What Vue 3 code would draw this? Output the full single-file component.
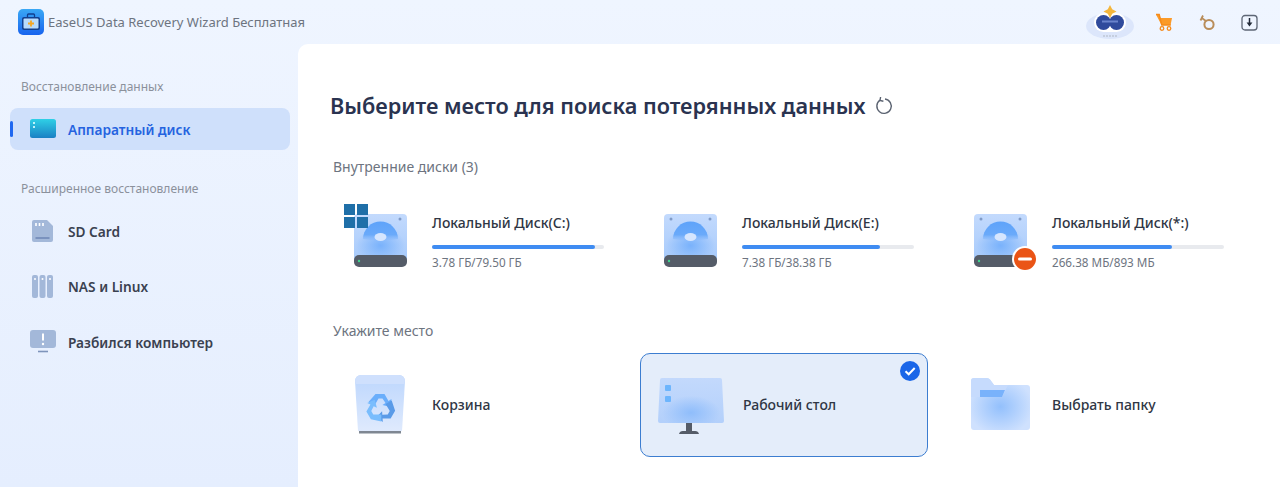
<script setup>
const disks = [
  { name: 'Локальный Диск(C:)', size: '3.78 ГБ/79.50 ГБ', used: 95, win: true },
  { name: 'Локальный Диск(E:)', size: '7.38 ГБ/38.38 ГБ', used: 80 },
  { name: 'Локальный Диск(*:)', size: '266.38 МБ/893 МБ', used: 70, bad: true },
]
</script>

<template>
  <div class="app">
    <header class="topbar">
      <svg class="logo" width="26" height="26" viewBox="0 0 26 26">
        <defs>
          <linearGradient id="logoBg" x1="0" y1="0" x2="0" y2="1">
            <stop offset="0" stop-color="#3aa8f5" />
            <stop offset="1" stop-color="#1763ee" />
          </linearGradient>
        </defs>
        <rect width="26" height="26" rx="5" fill="url(#logoBg)" />
        <rect x="9.500" y="5" width="7" height="4" rx="1" fill="none" stroke="#123f8e" stroke-width="1.300" />
        <rect x="4" y="8" width="18" height="13" rx="2" fill="#123f8e" />
        <rect x="5.500" y="9.500" width="15" height="10" rx="1" fill="#b7dafc" />
        <path d="M13 11.500v6M10 14.500h6" stroke="#f5a623" stroke-width="1.800" />
      </svg>
      <span class="app-name">EaseUS Data Recovery Wizard Бесплатная</span>
      <div class="top-icons">
        <svg width="50" height="38" viewBox="0 0 50 38">
          <ellipse cx="25" cy="23" rx="24" ry="13" fill="#dce6fb" />
          <rect x="9" y="10" width="32" height="19" rx="9.500" fill="#fff" />
          <circle cx="18.500" cy="19.500" r="7.500" fill="#2f4a9c" />
          <circle cx="31.500" cy="19.500" r="7.500" fill="#2f4a9c" />
          <rect x="17" y="17.500" width="16" height="2" fill="#6a83cc" />
          <path d="M25 2l2.200 4.300 4.300 2.200-4.300 2.200L25 15l-2.200-4.300-4.300-2.200 4.300-2.200z" fill="#f4b63c" />
          <path d="M18 33h14" stroke="#c6cfdf" stroke-width="2" stroke-dasharray="2 1" />
        </svg>
        <svg class="cart" width="18" height="18" viewBox="0 0 18 18">
          <path d="M1 1.500h3.200L5.500 5H17l-1.400 7H6.500z" fill="#fb9a28" />
          <path d="M1 1.500h3.200l2.600 10.500h9" fill="none" stroke="#f58a1a" stroke-width="1.400" />
          <circle cx="7" cy="15.500" r="1.800" fill="none" stroke="#f58a1a" stroke-width="1.300" />
          <circle cx="14" cy="15.500" r="1.800" fill="none" stroke="#f58a1a" stroke-width="1.300" />
        </svg>
        <svg class="ring" width="17" height="17" viewBox="0 0 17 17">
          <circle cx="10" cy="10.500" r="4.600" fill="none" stroke="#b98d5a" stroke-width="2" />
          <path d="M2 3.500l5 3.500M1.500 6.500L4 1.500" fill="none" stroke="#b98d5a" stroke-width="1.800" />
        </svg>
        <svg class="save" width="17" height="17" viewBox="0 0 17 17">
          <rect x="1" y="1.500" width="15" height="14.500" rx="3" fill="none" stroke="#5d6675" stroke-width="1.300" />
          <path d="M8.500 4v5.500" stroke="#222a38" stroke-width="1.500" />
          <path d="M5.600 8.600h5.800L8.500 12.400z" fill="#222a38" />
        </svg>
      </div>
    </header>

    <div class="body">
      <aside class="sidebar">
        <div class="side-label">Восстановление данных</div>
        <div class="side-item active">
          <span class="marker"></span>
          <svg width="26" height="20" viewBox="0 0 26 20">
            <defs>
              <linearGradient id="hwDisk" x1="0" y1="0" x2="0" y2="1">
                <stop offset="0" stop-color="#2fd0e6" />
                <stop offset="1" stop-color="#1a80c4" />
              </linearGradient>
            </defs>
            <rect width="26" height="19" rx="2.500" fill="url(#hwDisk)" />
            <rect x="3" y="3" width="2" height="2" fill="#bff2fa" />
            <rect x="3" y="7" width="2" height="2" fill="#bff2fa" />
          </svg>
          <span>Аппаратный диск</span>
        </div>

        <div class="side-label second">Расширенное восстановление</div>
        <div class="side-list">
          <div class="side-item">
            <svg width="26" height="24" viewBox="0 0 26 24">
              <path d="M2 3a2 2 0 0 1 2-2h13l6 6v14a2 2 0 0 1-2 2H4a2 2 0 0 1-2-2z" fill="#a3b8d9" />
              <path d="M6 4v3M9.500 4v3M13 4v3" stroke="#fff" stroke-width="1.600" />
              <path d="M5.500 19h14" stroke="#6c86b4" stroke-width="1.500" />
            </svg>
            <span>SD Card</span>
          </div>
          <div class="side-item">
            <svg width="26" height="24" viewBox="0 0 26 24">
              <rect x="2" y="0" width="6" height="23" rx="2" fill="#a3b8d9" />
              <rect x="9.500" y="0" width="6" height="23" rx="2" fill="#a3b8d9" />
              <rect x="17" y="0" width="6" height="23" rx="2" fill="#a3b8d9" />
              <circle cx="5" cy="4" r="1" fill="#fff" />
              <circle cx="12.500" cy="4" r="1" fill="#fff" />
              <circle cx="20" cy="4" r="1" fill="#fff" />
            </svg>
            <span>NAS и Linux</span>
          </div>
          <div class="side-item">
            <svg width="26" height="24" viewBox="0 0 26 24">
              <rect x="0" y="0" width="26" height="18" rx="3" fill="#a3b8d9" />
              <path d="M13 3.500v7" stroke="#fff" stroke-width="2" />
              <circle cx="13" cy="14" r="1.200" fill="#fff" />
              <path d="M8 21.500h10" stroke="#7e94bb" stroke-width="1.600" />
            </svg>
            <span>Разбился компьютер</span>
          </div>
        </div>
      </aside>

      <main class="main">
        <h1 class="heading">
          Выберите место для поиска потерянных данных
          <svg width="20" height="20" viewBox="0 0 20 20">
            <path d="M6 4.200a7.200 7.200 0 1 0 5-1.200" fill="none" stroke="#5b6371" stroke-width="1.400" />
            <path d="M6.600 1L6 4.400l3.400.8" fill="none" stroke="#5b6371" stroke-width="1.400" />
          </svg>
        </h1>

        <div class="section-label first">Внутренние диски (3)</div>
        <div class="cards disks">
          <div v-for="disk in disks" :key="disk.name" class="card">
            <svg class="icon" width="78" height="80" viewBox="0 0 78 80">
              <defs>
                <linearGradient id="diskBody" x1="0" y1="0" x2="0" y2="1">
                  <stop offset="0" stop-color="#c3dafd" />
                  <stop offset="1" stop-color="#a5c9fb" />
                </linearGradient>
                <radialGradient id="diskGlow" cx="0.500" cy="0.600" r="0.500">
                  <stop offset="0" stop-color="#79b2fc" />
                  <stop offset="1" stop-color="#79b2fc" stop-opacity="0" />
                </radialGradient>
                <linearGradient id="diskPlate" x1="0" y1="0" x2="0" y2="1">
                  <stop offset="0" stop-color="#5ea3fa" />
                  <stop offset="0.700" stop-color="#6aaafa" />
                  <stop offset="1" stop-color="#8fbdfb" stop-opacity="0.400" />
                </linearGradient>
              </defs>
              <rect x="12" y="16" width="53" height="50" rx="4" fill="url(#diskBody)" />
              <rect x="14" y="26" width="49" height="36" fill="url(#diskGlow)" />
              <path d="M21 41a17.500 17.500 0 0 1 35 0q-17 3-35 0z" fill="url(#diskPlate)" />
              <ellipse cx="38.500" cy="39" rx="6" ry="4" fill="#d6e6fe" />
              <circle cx="19" cy="21" r="1.500" fill="#7f9bc8" />
              <circle cx="58" cy="21" r="1.500" fill="#7f9bc8" />
              <path d="M12 62a5 5 0 0 1 5-5h43a5 5 0 0 1 5 5v2a5 5 0 0 1-5 5H17a5 5 0 0 1-5-5z" fill="#555c68" />
              <circle cx="17" cy="63" r="1.200" fill="#3fd58f" />
              <g v-if="disk.win" fill="#1f6fa8">
                <rect x="2" y="6" width="11" height="11" />
                <rect x="15" y="6" width="11" height="11" />
                <rect x="2" y="19" width="11" height="11" />
                <rect x="15" y="19" width="11" height="11" />
              </g>
              <g v-if="disk.bad">
                <circle cx="63" cy="61" r="13" fill="#fff" />
                <circle cx="63" cy="61" r="11" fill="#ea5416" />
                <rect x="56" y="59.500" width="14" height="3" rx="1.500" fill="#fff" />
              </g>
            </svg>
            <div class="info">
              <div class="name">{{ disk.name }}</div>
              <div class="bar"><div class="fill" :style="{ width: disk.used + '%' }"></div></div>
              <div class="size">{{ disk.size }}</div>
            </div>
          </div>
        </div>

        <div class="section-label">Укажите место</div>
        <div class="cards places">
          <div class="card">
            <svg class="icon" width="78" height="80" viewBox="0 0 78 80">
              <defs>
                <linearGradient id="binBody" x1="0" y1="0" x2="0" y2="1">
                  <stop offset="0" stop-color="#bcd6fd" />
                  <stop offset="1" stop-color="#dfeafd" />
                </linearGradient>
              </defs>
              <path d="M13 16a6 6 0 0 1 6-6h38a6 6 0 0 1 6 6l-3 50H16z" fill="url(#binBody)" />
              <path d="M13 16a6 6 0 0 1 6-6h38a6 6 0 0 1 6 6l-1 3H14z" fill="#cfe0fd" />
              <rect x="17" y="66" width="42" height="2.500" fill="#7f8792" />
              <g transform="translate(38.500 43)">
                <path d="M-5-14h9l4 7 3-2-1 8-8-2 3-2-3-4.500h-4l-4 7-6-3.500z" fill="#6aaefb" />
                <path d="M-5-14h9l4 7 3-2-1 8-8-2 3-2-3-4.500h-4l-4 7-6-3.500z" fill="#5a9be8" transform="rotate(120)" />
                <path d="M-5-14h9l4 7 3-2-1 8-8-2 3-2-3-4.500h-4l-4 7-6-3.500z" fill="#79bdfd" transform="rotate(240)" />
              </g>
            </svg>
            <span class="name">Корзина</span>
          </div>
          <div class="card selected">
            <svg class="icon" width="78" height="80" viewBox="0 0 78 80">
              <defs>
                <linearGradient id="deskBody" x1="0" y1="0" x2="0" y2="1">
                  <stop offset="0" stop-color="#c3d9fc" />
                  <stop offset="1" stop-color="#b3d0fb" />
                </linearGradient>
                <radialGradient id="deskGlow" cx="0.500" cy="0.700" r="0.500">
                  <stop offset="0" stop-color="#8fbdfb" />
                  <stop offset="1" stop-color="#8fbdfb" stop-opacity="0" />
                </radialGradient>
              </defs>
              <path d="M9 13h58a2 2 0 0 1 2 2l2 41a2 2 0 0 1-2 2H7a2 2 0 0 1-2-2l2-41a2 2 0 0 1 2-2z" fill="url(#deskBody)" />
              <rect x="9" y="24" width="58" height="34" fill="url(#deskGlow)" />
              <rect x="12" y="20" width="6" height="6" rx="1" fill="#6db5fd" />
              <rect x="12" y="31" width="6" height="6" rx="1" fill="#6db5fd" />
              <path d="M33 58h6v8h-6z" fill="#555c68" />
              <path d="M26 69a4 4 0 0 1 4-3h12a4 4 0 0 1 4 3z" fill="#555c68" />
            </svg>
            <span class="name">Рабочий стол</span>
            <svg class="check" width="20" height="20" viewBox="0 0 20 20">
              <circle cx="10" cy="10" r="10" fill="#1a66e8" />
              <path d="M5.500 10.300l3.200 3 6-6.300" fill="none" stroke="#fff" stroke-width="2" />
            </svg>
          </div>
          <div class="card">
            <svg class="icon" width="78" height="80" viewBox="0 0 78 80">
              <defs>
                <radialGradient id="folderGlow" cx="0.500" cy="0.550" r="0.550">
                  <stop offset="0" stop-color="#93c0fc" />
                  <stop offset="1" stop-color="#cfe1fe" />
                </radialGradient>
              </defs>
              <path d="M9 16a3 3 0 0 1 3-3h13a4 4 0 0 1 3 1.500l4 5.500h33a3 3 0 0 1 3 3v39a3 3 0 0 1-3 3H12a3 3 0 0 1-3-3z" fill="url(#folderGlow)" />
              <path d="M9 16a3 3 0 0 1 3-3h13a4 4 0 0 1 3 1.500l4 5.500h14l-6 12H9z" fill="#c6dbfd" />
              <path d="M18 25h25l-3 7H18z" fill="#79b2fb" />
            </svg>
            <span class="name">Выбрать папку</span>
          </div>
        </div>
      </main>
    </div>
  </div>
</template>

<style scoped>
.app {
  height: 487px;
  display: flex;
  flex-direction: column;
  background: linear-gradient(#eff5ff, #e5eefe);
  font-family: "Noto Sans", "Open Sans", sans-serif;
  overflow: hidden;
}

.topbar {
  height: 44px;
  flex: none;
  display: flex;
  align-items: center;
  padding: 0 22px 0 18px;
}
.logo {
  margin-right: 4px;
  flex: none;
}
.app-name {
  font-size: 13px;
  color: #6d7480;
}
.top-icons {
  margin-left: auto;
  display: flex;
  align-items: center;
}
.cart {
  margin-left: 20px;
}
.ring {
  margin-left: 26px;
}
.save {
  margin-left: 25px;
}

.body {
  flex: 1;
  display: flex;
  min-height: 0;
}

.sidebar {
  width: 298px;
  flex: none;
  padding: 33px 8px 0 10px;
  box-sizing: border-box;
}
.side-label {
  height: 20px;
  line-height: 20px;
  margin: 0 0 11px 11px;
  font-size: 12px;
  color: #8b919c;
}
.side-label.second {
  margin-top: 29px;
}
.side-list {
  display: flex;
  flex-direction: column;
  gap: 13.500px;
}
.side-item {
  position: relative;
  height: 42px;
  display: flex;
  align-items: center;
  gap: 12px;
  padding-left: 20px;
  border-radius: 8px;
  font-size: 13.700px;
  font-weight: 600;
  color: #3a4150;
}
.side-item.active {
  background: #cfe0fb;
  color: #2563e0;
}
.marker {
  position: absolute;
  left: 0;
  top: 13px;
  width: 3px;
  height: 16px;
  border-radius: 2px;
  background: #1f68f0;
}

.main {
  flex: 1;
  background: #fff;
  border-top-left-radius: 10px;
  padding: 47px 0 0 32px;
}
.heading {
  display: flex;
  align-items: center;
  gap: 9px;
  height: 30px;
  margin: 0;
  font-size: 21.700px;
  font-weight: 600;
  line-height: 30px;
  color: #2a3350;
}
.section-label {
  height: 20px;
  line-height: 20px;
  margin: 41px 0 0 3px;
  font-size: 14px;
  color: #6d7480;
}
.section-label.first {
  margin-top: 36px;
}

.cards {
  display: grid;
  grid-template-columns: repeat(3, 288px);
  gap: 22px;
}
.disks {
  margin-top: 19px;
}
.places {
  margin-top: 12px;
}
.card {
  position: relative;
  display: flex;
  align-items: center;
  gap: 12px;
  padding-left: 12px;
  box-sizing: border-box;
  border-radius: 10px;
}
.disks .card {
  height: 84px;
}
.places .card {
  height: 104px;
}
.card.selected {
  background: #e4edfa;
  border: 1px solid #3c7dd0;
}
.icon {
  flex: none;
}
.check {
  position: absolute;
  top: 7px;
  right: 7px;
}
.info {
  width: 172px;
  padding-top: 8px;
}
.name {
  font-size: 14px;
  font-weight: 500;
  line-height: 20px;
  color: #2f3644;
}
.bar {
  height: 4px;
  margin-top: 12px;
  border-radius: 2px;
  background: #e8eaee;
}
.fill {
  height: 100%;
  border-radius: 2px;
  background: #3f8cf2;
}
.size {
  margin-top: 4px;
  font-size: 11.700px;
  line-height: 18px;
  color: #6d7480;
}
</style>
